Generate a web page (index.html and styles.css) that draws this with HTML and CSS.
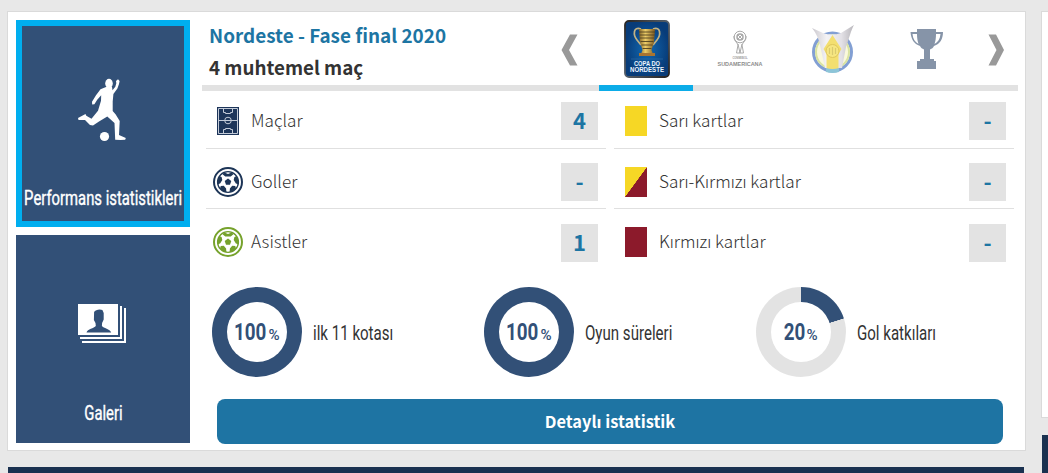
FILE: index.html
```
<!DOCTYPE html>
<html lang="tr">
<head>
<meta charset="utf-8">
<title>Performans istatistikleri</title>
<link rel="stylesheet" href="styles.css">
</head>
<body>
<svg class="defs" aria-hidden="true">
  <symbol id="ball" viewBox="0 0 30 30">
    <circle cx="15" cy="15" r="14" fill="none" stroke="currentColor" stroke-width="2"/>
    <circle cx="15" cy="15" r="10.4" fill="none" stroke="currentColor" stroke-width="1.4"/>
    <path fill="currentColor" d="M15 11.6l3.3 2.4-1.3 3.8h-4L11.700 14zM10.800 5.300L15 7l4.200-1.700 1 2.300-2.500 2h-5.400l-2.500-2zM4.600 13.800l2-4.600 2 .700.700 3-2.200 3.700-2.500.600zM25.400 13.800l-2-4.600-2 .700-.700 3 2.200 3.700 2.500.600zM7 21.800l.700-2.800 3.100-.300 2.300 2.900.300 3.700-3.400-1zM23 21.800l-.700-2.800-3.100-.300-2.300 2.900-.300 3.700 3.400-1z"/>
  </symbol>
</svg>
<div class="page">
  <main class="main">
    <section class="card">
      <nav class="side">
        <a class="tile active">
          <svg class="tile-icon player" viewBox="0 0 49 64" fill="#fff">
            <ellipse cx="31" cy="5.500" rx="3.800" ry="4.700"/>
            <path d="M28 9l6 0 .500 3.200 2.800-3.500 1-3.500-.300-2.300 2-1.600 1.600 1.800-.600 3-1.600 4.400-4 5.500-.700 7.500v9.500l3 3.500 4 6.500-.700 14 6.800 3-.600 1.700-4.600.300-5.400-.300L36.500 45l-7.200-6.500L21 43.500 15 47.500l-3-.400-5-5-6.500-.200L0 40l7.500-4 .800 1.800 5.200 3 6.500-8 3-10 .200-5.500-4 4.500-2.800 4.500-2.200.200-.200-2.700 4-6.500 4.500-6z"/>
            <circle cx="26.500" cy="58.500" r="4.600"/>
          </svg>
          <span class="cond tile-label wide"><span>Performans istatistikleri</span></span>
        </a>
        <a class="tile">
          <svg class="tile-icon gallery" viewBox="0 0 48 39">
            <path fill="#fff" d="M0 0h40v31H0zM42 2h2v33H2v-2h40zM46 4h2v35H4v-2h42z"/>
            <path fill="#325077" d="M8.500 28.500c1-3.700 7.500-4 9.300-6.500l-.300-3-1.600-3 .2-8c1.200-2.500 6-3.300 8.300-2l1.300 3v6.500l-1.600 3.500-.2 3c1.600 2.300 8.100 2.800 9.300 6.500z"/>
          </svg>
          <span class="cond tile-label"><span>Galeri</span></span>
        </a>
      </nav>
      <div class="content">
        <header class="head">
          <div class="titles">
            <h2>Nordeste - Fase final 2020</h2>
            <p>4 muhtemel maç</p>
          </div>
          <svg class="arrow left" viewBox="0 0 17 32"><path fill="#999" d="M9 .500h7.500l-8.500 15.500 8.500 15.500H9L.500 16z"/></svg>
          <div class="tabs">
            <div class="tab on">
              <svg width="46" height="58" viewBox="0 0 46 58">
                <defs>
                  <radialGradient id="blue"><stop offset="0" stop-color="#126ab3"/><stop offset="1" stop-color="#083c79"/></radialGradient>
                  <linearGradient id="rim" x2="1" y2="1"><stop offset="0" stop-color="#292522"/><stop offset=".5" stop-color="#555f6a"/><stop offset="1" stop-color="#24211f"/></linearGradient>
                  <linearGradient id="gold"><stop offset="0" stop-color="#846326"/><stop offset=".4" stop-color="#edcd68"/><stop offset="1" stop-color="#7b5720"/></linearGradient>
                </defs>
                <rect x="1" y="1" width="44" height="56" rx="4" fill="url(#blue)" stroke="url(#rim)" stroke-width="1.800"/>
                <path d="M17 9C9 6 9 15 13 20l4 5M29 9C37 6 37 15 33 20l-4 5" fill="none" stroke="#c2b283" stroke-width="1.700"/>
                <path d="M15 9h16l-1 13-2.500 8 1.500 4H17l1.500-4-2.500-8z" fill="url(#gold)"/>
                <path d="M15 12h16M15.500 15h15M16 18h14M16.500 21.500h13M17.500 25h11M18.500 28.500h9" stroke="#50421f" stroke-width=".9"/>
                <path d="M15 33h16v3H15z" fill="#a87431"/>
                <path d="M7 39h32" stroke="#3b77ae" stroke-width=".5"/>
                <text class="logo-text" x="23" y="46" textLength="26" lengthAdjust="spacingAndGlyphs" font-size="7" fill="#eef6ff">COPA DO</text>
                <text class="logo-text" x="23" y="52.400" textLength="34" lengthAdjust="spacingAndGlyphs" font-size="7" fill="#eef6ff">NORDESTE</text>
              </svg>
            </div>
            <div class="tab">
              <svg class="wide-logo" width="54" height="42" viewBox="-3 -1 54 42">
                <g fill="none" stroke="#aaa" stroke-width="1" transform="translate(1 1)"><circle cx="23" cy="7" r="5.800"/><circle cx="23" cy="7" r="3" stroke-width="1.500"/><path d="M17 6c-.500 5 3 6 4 9l-1.500 8h7L25 15c1-3 4.500-4 4-9M21 14l2 9 2-9M20 4l6 6M26 4l-6 6"/></g>
                <text class="logo-text" x="24" y="30" textLength="15" lengthAdjust="spacingAndGlyphs" font-size="4" fill="#999">CONMEBOL</text>
                <text class="logo-text" x="24" y="36.500" textLength="45" lengthAdjust="spacingAndGlyphs" font-size="6" fill="#8d8d8d">SUDAMERICANA</text>
              </svg>
            </div>
            <div class="tab">
              <svg width="42" height="48" viewBox="0 0 42 48">
                <defs><linearGradient id="silver"><stop offset="0" stop-color="#cbc8ce"/><stop offset=".35" stop-color="#f4f3f5"/><stop offset=".7" stop-color="#e3e1e6"/><stop offset="1" stop-color="#b7b5ba"/></linearGradient></defs>
                <circle cx="20.500" cy="27" r="19" fill="#faf9dc" stroke="#829fd3" stroke-width="3"/>
                <circle cx="20.500" cy="27" r="16.500" fill="none" stroke="#d9e3a2" stroke-width="2"/>
                <path d="M0 3l11 5q9 3 18 0L42 0c-3 5-5 14-8 22l-4 21H13L8 20C6 11 3 7 0 3z" fill="url(#silver)"/>
                <path d="M20.500 10l9 14-3 5v17h-12V29l-3-5z" fill="#f3df70"/>
                <circle cx="20.500" cy="26" r="6.500" fill="#f6e681" stroke="#dfc65c"/>
                <path d="M17.500 23v6M20.500 22v8M23.500 23v6" stroke="#d9ca70" stroke-width="1.200"/>
                <path d="M14 43q6.500 2 13 0v4q-6.500 2-13 0z" fill="#8dc5d8"/>
              </svg>
            </div>
            <div class="tab">
              <svg width="34" height="40" viewBox="0 0 34 40"><path fill="#8694a8" fill-rule="evenodd" d="M7 0h19v3h7c0 7-3 12-9 14-1 2-2 2.500-4 3.500V30h4v2h2v8H7v-8h3v-2h4v-9.500c-2-1-3-1.500-4-3.500C4 15 1 10 .500 3H7zM2.500 5c.500 5 2.500 8 6 10C7.500 12 7 9 7 5zM26 5c0 4-.500 7-1.500 10 3.500-2 5.500-5 6-10z"/></svg>
            </div>
          </div>
          <svg class="arrow right" viewBox="0 0 17 32"><path fill="#999" d="M8 .500H.500L8.500 16 .500 31.500H8L16 16z"/></svg>
        </header>
        <div class="bar"><span class="bar-active"></span></div>
        <div class="stats">
          <div class="row">
            <span class="ic"><svg width="22" height="28" viewBox="0 0 22 28"><path fill="#1d355a" d="M0 0h22v28H0z"/><g fill="none" stroke="#c3cbd8" stroke-width="1"><path d="M1.500 1.500h19v25h-19zM1.500 13.500h19M6.500 1.500v4h2v1h5v-1h2v-4M6.500 26.500v-4h2v-1h5v1h2v4"/><circle cx="11" cy="13.500" r="3.300"/></g></svg></span>
            <span class="name">Maçlar</span><b class="val">4</b>
          </div>
          <div class="row">
            <span class="ic"><i class="pc yellow"></i></span><span class="name">Sarı kartlar</span><b class="val">-</b>
          </div>
          <div class="row">
            <span class="ic"><svg class="ball navy"><use href="#ball"/></svg></span><span class="name">Goller</span><b class="val">-</b>
          </div>
          <div class="row">
            <span class="ic"><i class="pc both"></i></span><span class="name">Sarı-Kırmızı kartlar</span><b class="val">-</b>
          </div>
          <div class="row">
            <span class="ic"><svg class="ball green"><use href="#ball"/></svg></span><span class="name">Asistler</span><b class="val">1</b>
          </div>
          <div class="row">
            <span class="ic"><i class="pc red"></i></span><span class="name">Kırmızı kartlar</span><b class="val">-</b>
          </div>
        </div>
        <div class="rings">
          <div class="ring-item"><div class="ring full"><div class="hole"><span class="num three"><span>100</span></span><span class="unit"><span>%</span></span></div></div><span class="cond ring-label"><span>ilk 11 kotası</span></span></div>
          <div class="ring-item"><div class="ring full"><div class="hole"><span class="num three"><span>100</span></span><span class="unit"><span>%</span></span></div></div><span class="cond ring-label"><span>Oyun süreleri</span></span></div>
          <div class="ring-item"><div class="ring part"><div class="hole"><span class="num two"><span>20</span></span><span class="unit"><span>%</span></span></div></div><span class="cond ring-label"><span>Gol katkıları</span></span></div>
        </div>
        <a class="button">Detaylı istatistik</a>
      </div>
    </section>
    <div class="strip"></div>
  </main>
  <aside class="aside">
    <div class="aside-card"></div>
    <div class="aside-strip"></div>
  </aside>
</div>
</body>
</html>
```
FILE: styles.css
```
* { box-sizing: border-box; }
body {
  margin: 0;
  background: #e8e8e8;
  color: #333;
  font-family: "Noto Sans CJK SC", "Noto Sans", sans-serif;
}
h2, p { margin: 0; }
svg { display: block; flex: none; }
.defs { width: 0; height: 0; position: absolute; }
.page { display: flex; gap: 15px; height: 473px; padding: 11px 0 0 7px; overflow: hidden; }
.main { width: 1019px; flex: none; display: flex; flex-direction: column; }
.card {
  height: 441px;
  padding: 8px 0 0 8px;
  display: flex;
  gap: 12px;
  background: #fff;
  border: 1px solid #dadada;
}
.strip { height: 6px; margin: 16px 2px 0 1px; background: #1a3150; }
.aside { width: 20px; flex: none; }
.aside-card { height: 407px; background: #fff; border: 1px solid #dadada; }
.aside-strip { margin: 17px 0 0 1px; height: 40px; background: #1a3150; }

.side { width: 174px; flex: none; display: flex; flex-direction: column; gap: 8px; }
.tile {
  height: 208px;
  display: flex;
  flex-direction: column;
  align-items: center;
  background: #325077;
}
.tile.active { height: 207px; border: 6px solid #00aeef; }
.player { width: 49px; height: 64px; margin: 52px 2px 34px 0; }
.gallery { width: 48px; height: 39px; margin: 69px 2px 48px 0; }
.cond {
  display: flex;
  font-family: Roboto, sans-serif;
  white-space: nowrap;
}
.cond > span { display: block; }
.tile-label { height: 44px; align-items: center; font-size: 20.5px; color: #fff; -webkit-text-stroke: .4px #fff; }
.tile-label > span { transform: scaleX(.724); }
.wide { justify-content: center; width: 162px; }

.content { width: 816px; display: flex; flex-direction: column; }
.head { height: 65px; display: flex; }
.titles { width: 359px; padding-left: 7px; font-weight: 700; }
.titles h2 { font-size: 18.9px; line-height: 29px; color: #1d75a3; }
.titles p { font-size: 18.8px; line-height: 36px; }
.arrow { width: 17px; height: 32px; margin-top: 14px; }
.left { margin-right: 22px; }
.tabs { display: flex; width: 374px; height: 58px; }
.tab { width: 93.4px; display: flex; align-items: center; justify-content: center; }
.right { margin-left: 14px; }
.logo-text { font-family: "Liberation Sans", sans-serif; font-weight: 700; text-anchor: middle; }
.bar { height: 6px; background: #e2e2e2; display: flex; padding-left: 397px; flex: none; }
.bar-active { width: 94px; background: #0cace8; }

.stats {
  display: grid;
  grid-template-columns: 400px 400px;
  grid-template-rows: 58px 60px 66px;
  column-gap: 8px;
  padding-left: 4px;
}
.row { display: flex; align-items: center; padding: 7px 8px 0 7px; border-bottom: 1px solid #e0e0e0; }
.row:nth-child(-n+2) { padding-top: 3px; }
.row:nth-child(n+5) { border: 0; padding-top: 0; }
.row:nth-child(n+5) .val { margin-top: 2px; }
.ic { width: 30px; display: flex; justify-content: center; }
.ball { width: 30px; height: 30px; }
.navy { color: #1d3557; }
.green { color: #76a22c; }
.pc { width: 22px; height: 30px; }
.yellow { background: #f6d725; }
.red { background: #8c1a2b; }
.both { background: linear-gradient(to bottom right, #f6d725 49.5%, #8c1a2b 50.5%); }
.name { flex: 1; margin-left: 8px; padding-bottom: 2px; font-size: 17.2px; line-height: 30px; font-weight: 300; }
.val {
  width: 37px;
  height: 38px;
  line-height: 35px;
  background: #e3e3e3;
  color: #1d75a3;
  font-size: 22px;
  text-align: center;
}

.rings { display: grid; grid-template-columns: repeat(3, 272px); padding: 12px 0 0 10px; }
.ring-item { display: flex; align-items: center; gap: 11px; height: 90px; }
.ring { width: 90px; height: 90px; border-radius: 50%; padding: 15px; flex: none; }
.full { background: #325077; }
.part { background: conic-gradient(#325077 20%, #e3e3e3 20.2%); }
.hole {
  width: 60px;
  height: 60px;
  border-radius: 50%;
  background: #fff;
  color: #325077;
  font-family: Roboto, sans-serif;
  display: flex;
  justify-content: center;
  align-items: baseline;
  gap: 1px;
  line-height: 60px;
}
.num, .unit { display: flex; justify-content: center; }
.num { font-size: 23.5px; font-weight: 700; }
.num > span { transform: scaleX(.8); }
.three { width: 33px; }
.two { width: 22px; }
.unit { width: 12px; font-size: 14px; font-weight: 500; }
.unit > span { transform: scaleX(1.08); }
.ring-label { font-size: 20.5px; padding-top: 2px; }
.ring-label > span { transform: scaleX(.735); transform-origin: left; }
.button {
  display: block;
  margin: 22px 15px 0;
  height: 45px;
  line-height: 44px;
  border-radius: 8px;
  background: #1e74a3;
  color: #fff;
  text-align: center;
  font-size: 16.4px;
  font-weight: 700;
}
```
